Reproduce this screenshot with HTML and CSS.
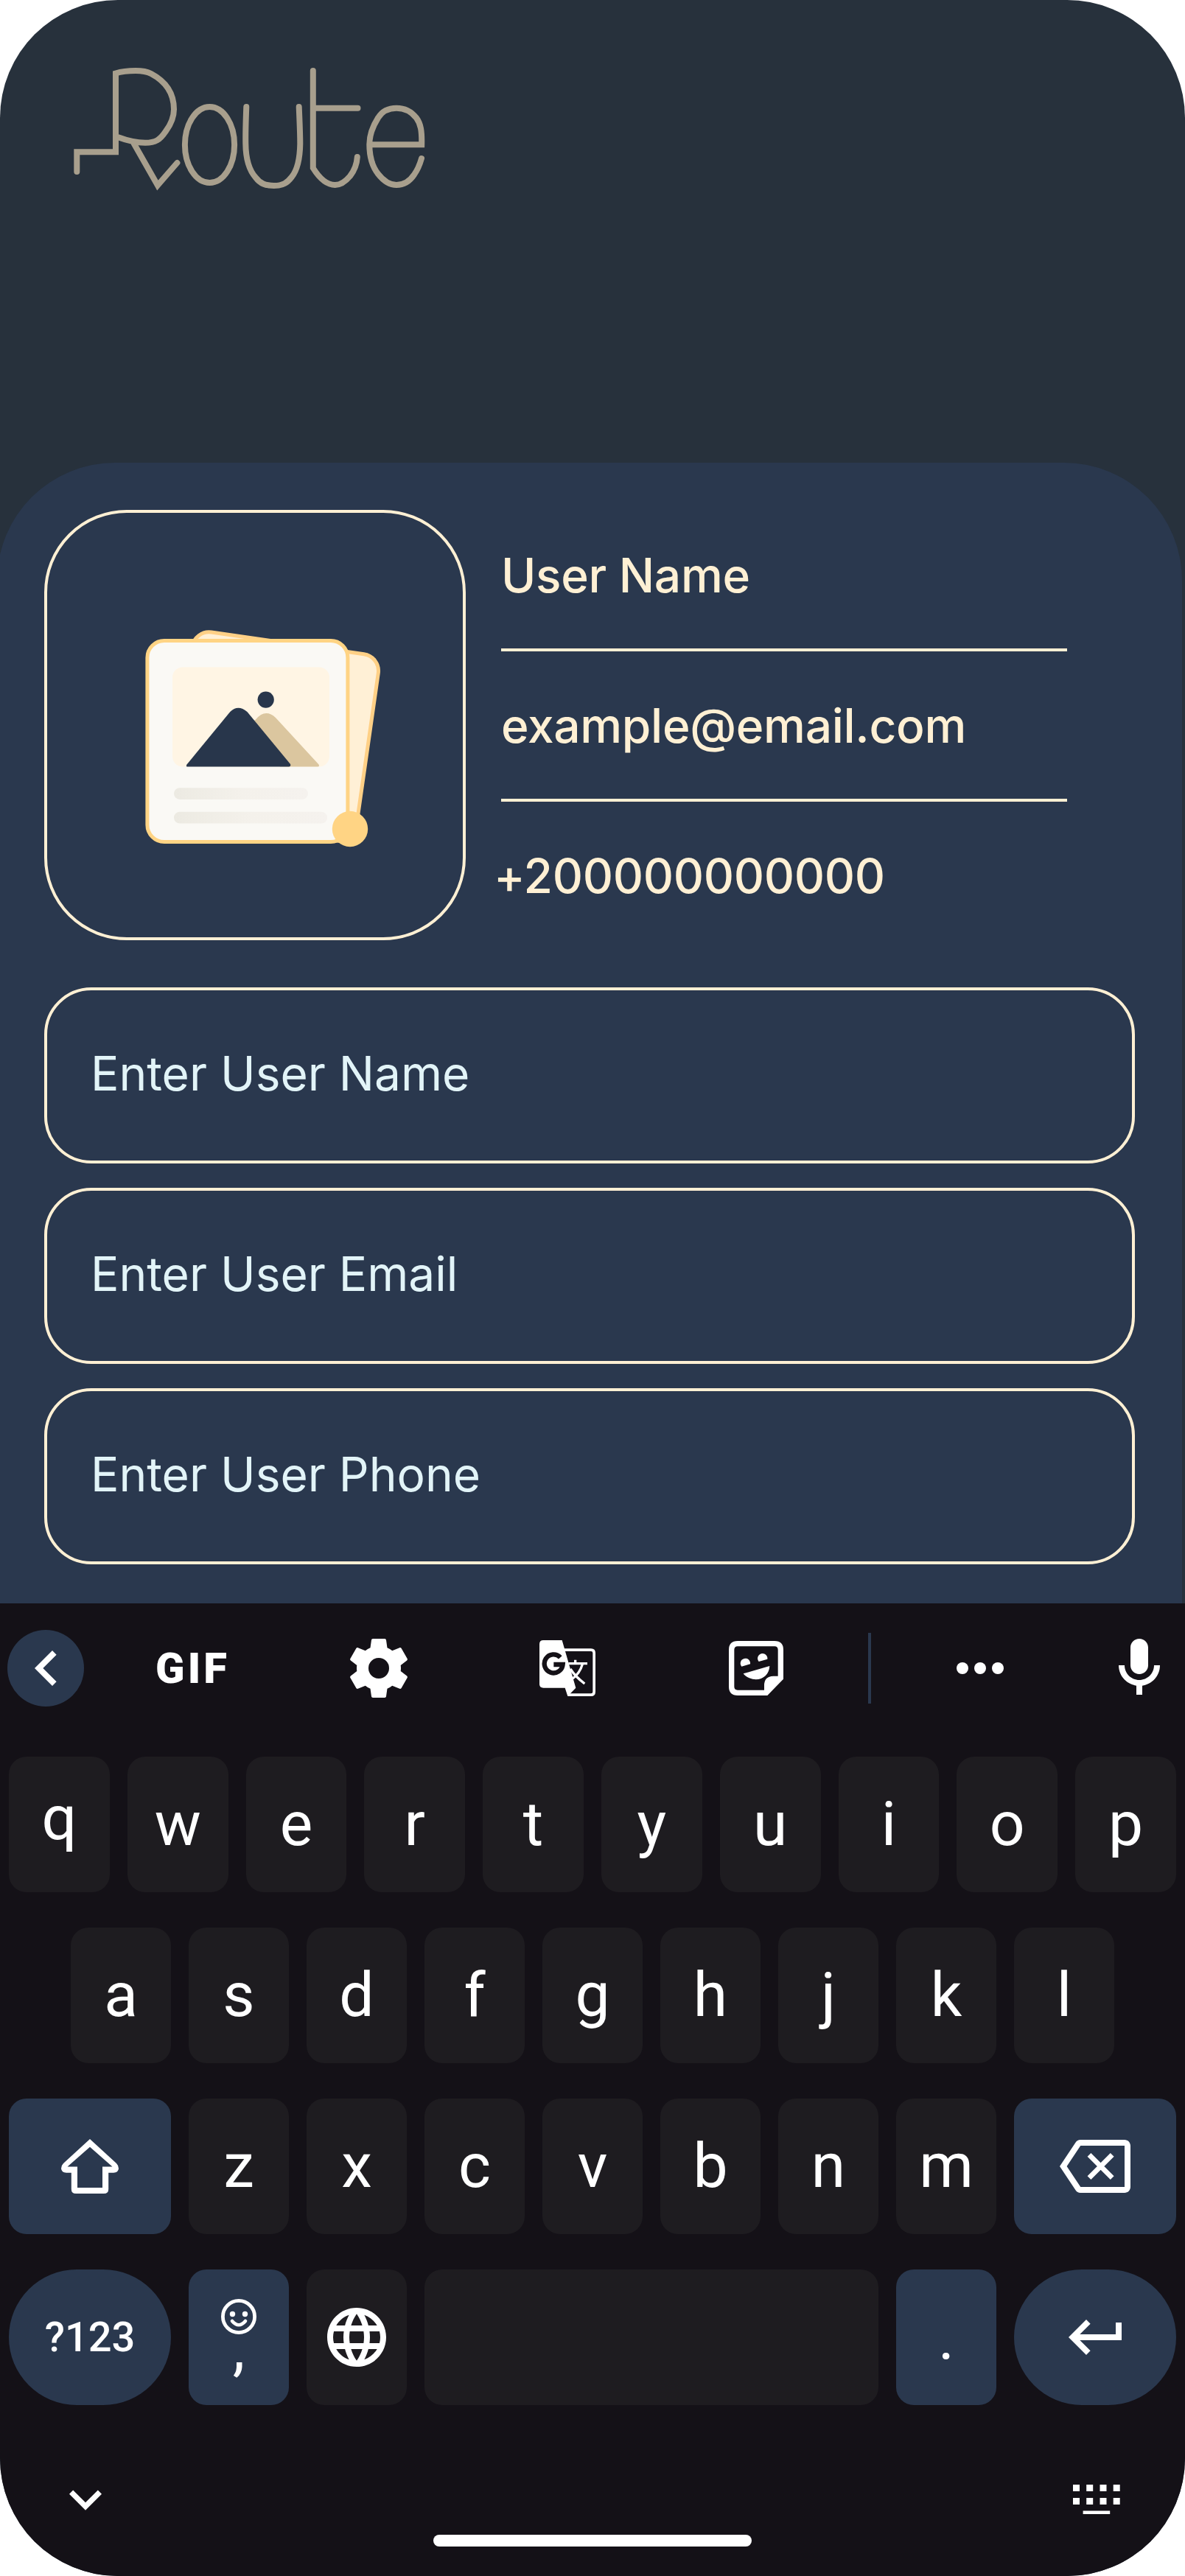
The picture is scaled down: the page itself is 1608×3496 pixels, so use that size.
FILE: index.html
```html
<!DOCTYPE html>
<html lang="en">
<head>
<meta charset="utf-8">
<title>Route</title>
<link rel="stylesheet" href="styles.css">
</head>
<body>
<div class="device">
  <header class="header">
    <svg class="logo" viewBox="96 88 488 176" role="img" aria-label="Route">
      <path d="M104.3 233V206.3H157V99.5C165 97 174 96 184 96C193 96 199 96.8 205 100C222 109 236 124 236 148.3C236 160 231 170 225 178C217 190 211 193.7 197 193.7C184 193.7 173 191 160.5 186.3"/>
      <path d="M181.8 195L213.9 251.5L240.4 221"/>
      <ellipse cx="284.5" cy="196.5" rx="33.6" ry="51.5"/>
      <path d="M334.3 145C333.5 165 333 180 333.3 195C333.5 215 338 231 347 241C353 249 360 252 371.8 252C384 252 390 248 396 240C404 230 407 213 407.3 195C407.3 180 406.5 165 405.7 145"/>
      <path d="M424.8 96V228C431 238 442 251 454.7 251C464 251 470 245 475 239C482 230 484.3 222 484.8 213M424.8 146.8H485.5"/>
      <path d="M503 196.3H572.2C572.6 178 571 168 565 160C558 151 549 146.7 538 146.7C527 146.7 519 150 513 160C506 171 501.3 184 501.3 196C501.3 213 506 227 513 236C520 245 528 251 538 251C548 251 556 246 562 237C567 230 570 222 572 215"/>
    </svg>
  </header>

  <main class="panel">
    <section class="profile">
      <div class="avatar">
        <svg class="picture" viewBox="190 845 334 310">
          <defs>
            <linearGradient id="line" x1="0" x2="1" y1="0" y2="0">
              <stop offset="0" stop-color="#ECEAE2"/>
              <stop offset="0.5" stop-color="#F4F1EB"/>
              <stop offset="1" stop-color="#F5F2EE"/>
            </linearGradient>
          </defs>
          <rect x="2.5" y="2.5" width="255" height="256" rx="23" transform="translate(262 852) rotate(8.15)" fill="#FFF0D6" stroke="#FFD086" stroke-width="5"/>
          <rect x="199.9" y="869.5" width="272" height="273" rx="23" fill="#FAF9F5" stroke="#FFD484" stroke-width="5"/>
          <rect x="234" y="905.4" width="213" height="135.2" rx="14" fill="#FFF5E4"/>
          <path d="M340 982L347 976.5Q360 961 374 974L432.5 1037.5Q434 1040.5 431 1040.5H380Z" fill="#DBC69F"/>
          <path d="M312.3 966Q323 955.5 335.4 966L394 1037Q395 1040.5 392 1040.5H254Q252 1040.5 253.5 1037.5Z" fill="#28364B"/>
          <circle cx="360.7" cy="949.6" r="11.1" fill="#28364B"/>
          <rect x="236" y="1069.3" width="182" height="15.6" rx="7.8" fill="url(#line)"/>
          <rect x="236" y="1101.8" width="208" height="15.8" rx="7.9" fill="url(#line)"/>
          <circle cx="475" cy="1125" r="24.2" fill="#FFD484"/>
        </svg>
      </div>
      <div class="details">
        <div class="detail">User Name</div>
        <div class="detail">example@email.com</div>
        <div class="detail detail-phone">+200000000000</div>
      </div>
    </section>
    <form class="form">
      <div class="field">Enter User Name</div>
      <div class="field">Enter User Email</div>
      <div class="field">Enter User Phone</div>
    </form>
  </main>

  <section class="keyboard">
    <div class="toolbar">
      <span class="back"><svg class="icon" viewBox="0 0 24 24"><path d="M15.41 7.41 14 6l-6 6 6 6 1.41-1.41L10.83 12z"/></svg></span>
      <span class="tool"><span class="gif">GIF</span></span>
      <span class="tool"><svg class="icon" viewBox="0 0 24 24"><path d="M12 15.5A3.5 3.5 0 0 1 8.5 12 3.5 3.5 0 0 1 12 8.5 3.5 3.5 0 0 1 15.5 12 3.5 3.5 0 0 1 12 15.5m7.43-2.53c.04-.32.07-.64.07-.97 0-.33-.03-.66-.07-1l2.11-1.63c.19-.15.24-.42.12-.64l-2-3.46c-.12-.22-.39-.31-.61-.22l-2.49 1c-.52-.39-1.06-.73-1.69-.98l-.37-2.65A.506.506 0 0 0 14 2h-4c-.25 0-.46.18-.5.42l-.37 2.65c-.63.25-1.17.59-1.69.98l-2.49-1c-.22-.09-.49 0-.61.22l-2 3.46c-.13.22-.07.49.12.64L4.57 11c-.04.34-.07.67-.07 1 0 .33.03.65.07.97l-2.11 1.66c-.19.15-.25.42-.12.64l2 3.46c.12.22.39.3.61.22l2.49-1.01c.52.4 1.06.74 1.69.99l.37 2.65c.04.24.25.42.5.42h4c.25 0 .46-.18.5-.42l.37-2.65c.63-.26 1.17-.59 1.69-.99l2.49 1.01c.22.08.49 0 .61-.22l2-3.46c.12-.22.07-.49-.12-.64z"/></svg></span>
      <span class="tool"><svg class="translate" viewBox="66 66 228 228">
        <path d="M160 105.5H276Q288.5 105.5 288.5 118V276Q288.5 288.5 276 288.5H182" fill="none" stroke="#fff" stroke-width="11"/>
        <path d="M82 66H158L214 260L181 294L170 260H82Q66 260 66 244V82Q66 66 82 66Z"/>
        <path d="M151 136A37.5 37.5 0 1 0 161 165H124" fill="none" stroke="#141117" stroke-width="19"/>
        <path d="M184 161H261M212 146V161M242 161Q230 204 196 226M192 183Q210 212 250 243" fill="none" stroke="#fff" stroke-width="10"/>
      </svg></span>
      <span class="tool"><svg class="sticker" viewBox="837 69 222 222">
        <path fill-rule="evenodd" d="M873 69H1023Q1059 69 1059 105V224L994 291H873Q837 291 837 255V105Q837 69 873 69ZM873 91Q859 91 859 105V255Q859 269 873 269H981V250Q981 213 1018 212H1037V105Q1037 91 1023 91Z"/>
        <path d="M889 173A20 20 0 1 1 924 163ZM959 153A20 20 0 1 1 994 143ZM896 202L1003 171C1002 212 962 238 920 220Q903 213 896 202Z"/>
      </svg></span>
      <span class="divider"></span>
      <span class="more"><i></i><i></i><i></i></span>
      <span class="mic"><svg class="icon" viewBox="0 0 24 24"><path d="M12 14c1.66 0 3-1.34 3-3V5c0-1.66-1.34-3-3-3S9 3.34 9 5v6c0 1.66 1.34 3 3 3zM17 11c0 2.76-2.24 5-5 5s-5-2.24-5-5H5c0 3.53 2.61 6.43 6 6.92V21h2v-3.08c3.39-.49 6-3.39 6-6.92z"/></svg></span>
    </div>
    <div class="rows">
      <div class="row">
        <span class="key key-q">q</span><span class="key">w</span><span class="key">e</span><span class="key">r</span><span class="key">t</span><span class="key">y</span><span class="key">u</span><span class="key">i</span><span class="key">o</span><span class="key">p</span>
      </div>
      <div class="row row-home">
        <span class="key">a</span><span class="key">s</span><span class="key">d</span><span class="key">f</span><span class="key">g</span><span class="key">h</span><span class="key">j</span><span class="key">k</span><span class="key">l</span>
      </div>
      <div class="row">
        <span class="key wide accent"><svg class="shift" viewBox="0 0 80 76"><path fill-rule="evenodd" d="M40 1L76 34Q79 37 79 41Q78.500 46.700 72 46.700H65.200V69Q65.200 75 59 75H21Q14.800 75 14.800 69V46.700H8Q1.500 46.700 1 41Q1 37 4 34ZM40 11.800L9.500 38.500H23V67H57V38.500H70.500Z"/></svg></span>
        <span class="key">z</span><span class="key">x</span><span class="key">c</span><span class="key">v</span><span class="key">b</span><span class="key">n</span><span class="key">m</span>
        <span class="key wide accent"><svg class="icon" viewBox="0 0 24 24"><path d="M22 3H7c-.69 0-1.23.35-1.59.88L0 12l5.41 8.11c.36.53.9.89 1.59.89h15c1.1 0 2-.9 2-2V5c0-1.1-.9-2-2-2zm0 16H7.07L2.4 12l4.66-7H22z"/><path d="M10 8.100L17.800 15.900M17.800 8.100L10 15.900" stroke="#fff" stroke-width="1.700"/></svg></span>
      </div>
      <div class="row">
        <span class="key wide accent pill symbols">?123</span>
        <span class="key accent emoji"><svg class="smile" viewBox="0 0 48 48"><circle cx="24" cy="24" r="21.600" fill="none" stroke="#fff" stroke-width="4.800"/><circle cx="15.500" cy="20.500" r="3.700"/><circle cx="32.500" cy="20.500" r="3.700"/><path d="M15 30Q24 40.500 33 30" fill="none" stroke="#fff" stroke-width="4.600" stroke-linecap="round"/></svg><span class="comma">,</span></span>
        <span class="key"><svg class="icon" viewBox="0 0 24 24"><path d="M11.99 2C6.47 2 2 6.480 2 12s4.470 10 9.990 10C17.520 22 22 17.520 22 12S17.520 2 11.990 2zm6.930 6h-2.950c-.32-1.250-.78-2.450-1.380-3.560 1.840.63 3.370 1.910 4.330 3.560zM12 4.040c.83 1.200 1.480 2.530 1.910 3.960h-3.820c.43-1.430 1.080-2.760 1.910-3.960zM4.260 14C4.100 13.360 4 12.690 4 12s.1-1.360.26-2h3.380c-.08.66-.14 1.320-.14 2s.06 1.340.14 2zm.82 2h2.950c.32 1.250.78 2.450 1.380 3.560-1.840-.63-3.370-1.900-4.330-3.560zm2.950-8H5.080c.96-1.660 2.490-2.930 4.330-3.560C8.810 5.550 8.350 6.750 8.030 8zM12 19.960c-.83-1.200-1.480-2.530-1.910-3.960h3.820c-.43 1.430-1.080 2.760-1.910 3.960zM14.340 14H9.660c-.09-.66-.16-1.320-.16-2s.07-1.350.16-2h4.680c.09.65.16 1.320.16 2s-.07 1.340-.16 2zm.25 5.560c.6-1.110 1.060-2.310 1.380-3.560h2.950c-.96 1.650-2.490 2.930-4.330 3.560zM16.360 14c.08-.66.14-1.320.14-2s-.06-1.340-.14-2h3.380c.16.640.26 1.310.26 2s-.1 1.360-.26 2z"/></svg></span>
        <span class="key space"></span>
        <span class="key accent period">.</span>
        <span class="key wide accent pill"><svg class="icon" viewBox="0 0 24 24"><path d="M19 7v4H6.830l3.580-3.590L9 6l-6 6 6 6 1.410-1.410L6.830 13H21V7z"/></svg></span>
      </div>
    </div>
    <div class="navbar">
      <svg class="hide" viewBox="0 0 24 24"><path d="M16.590 8.590 12 13.170 7.410 8.590 6 10l6 6 6-6z"/></svg>
      <span class="home"></span>
      <svg class="switcher" viewBox="0 0 64 40"><path d="M0 0h9v9H0zM18.200 0h9v9h-9zM36.500 0h9v9h-9zM54.700 0h9v9h-9zM0 18h9v9H0zM18.200 18h9v9h-9zM36.500 18h9v9h-9zM54.700 18h9v9h-9zM13.600 35.500h36.600v4.500H13.600z"/></svg>
    </div>
  </section>
</div>
</body>
</html>
```
FILE: styles.css
```css
* { box-sizing: border-box; }

body {
  margin: 0;
  background: #fff;
  font-family: Inter, "Liberation Sans", sans-serif;
}

svg {
  display: block;
  fill: #fff;
  flex: none;
}

.device {
  width: 1608px;
  height: 3496px;
  border-radius: 160px;
  overflow: hidden;
  display: flex;
  flex-direction: column;
  background: #27313c;
}

.header {
  height: 628px;
  padding: 88px 96px;
}

.logo {
  width: 488px;
  height: 176px;
  fill: none;
  stroke: #a89f8d;
  stroke-width: 8;
  stroke-linecap: round;
  stroke-miterlimit: 6;
}

.panel {
  width: 1608px;
  height: 1548px;
  margin-left: -4px;
  padding: 64px 64px 0;
  border-radius: 160px 160px 0 0;
  background: #2a384e;
}

.profile {
  display: flex;
  gap: 48px;
  height: 584px;
  margin-bottom: 64px;
}

.avatar {
  width: 572px;
  height: 584px;
  border: 4px solid #fff0d4;
  border-radius: 112px;
  padding: 149px 0 0 126px;
}

.picture {
  width: 334px;
  height: 310px;
}

.details { width: 768px; }

.detail {
  height: 192px;
  line-height: 178px;
  font-size: 64px;
  font-weight: 500;
  letter-spacing: -0.3px;
  color: #fff0d4;
  border-bottom: 4px solid #fff0d4;
  white-space: nowrap;
}

.detail + .detail {
  height: 204px;
  line-height: 202px;
}

.detail-phone.detail {
  height: 188px;
  border: 0;
  margin-left: -10px;
}

.form {
  display: flex;
  flex-direction: column;
  gap: 33px;
  width: 1480px;
}

.field {
  height: 239px;
  border: 4px solid #fff0d4;
  border-radius: 64px;
  padding-left: 59px;
  line-height: 226px;
  font-size: 64px;
  color: #e2f4f8;
}

.keyboard {
  height: 1320px;
  background: #141117;
  color: #fff;
  font-family: Roboto, "Liberation Sans", sans-serif;
}

.toolbar {
  height: 176px;
  padding-left: 10px;
  display: flex;
  align-items: center;
}

.icon { width: 96px; height: 96px; }

.back {
  width: 104px;
  height: 104px;
  border-radius: 50%;
  background: #2a384e;
  display: flex;
  align-items: center;
  padding-left: 5px;
  margin-right: 16px;
}

.tool {
  width: 256px;
  display: flex;
  justify-content: center;
}

.gif {
  font-size: 58px;
  font-weight: 900;
  letter-spacing: 4px;
  line-height: 80px;
  padding-left: 7px;
}

.translate { width: 76px; height: 76px; }
.sticker { width: 74px; height: 74px; }

.divider {
  width: 4px;
  height: 96px;
  margin-left: 24px;
  background: #2a384e;
}

.more {
  display: flex;
  gap: 8px;
  margin: 0 136px 0 116px;
}

.more i {
  width: 16px;
  height: 16px;
  border-radius: 50%;
  background: #fff;
}

.rows {
  padding: 32px 12px 0;
  display: flex;
  flex-direction: column;
  gap: 48px;
}

.row {
  display: flex;
  gap: 24px;
}

.row-home { padding: 0 84px; }

.key {
  flex: 1;
  height: 184px;
  border-radius: 24px;
  background: #1e1c20;
  display: flex;
  align-items: center;
  justify-content: center;
  font-size: 84px;
  line-height: 98px;
}

.key-q { padding-bottom: 16px; }
.wide { flex: 0 0 220px; }
.space { flex: 0 0 616px; }
.accent { background: #2a384e; }
.pill { border-radius: 92px; }
.shift { width: 80px; height: 76px; }

.symbols {
  font-size: 56px;
  font-weight: 500;
}

.emoji {
  flex-direction: column;
  justify-content: flex-start;
  padding-top: 40px;
}

.smile { width: 48px; height: 48px; }

.comma {
  line-height: 94px;
  margin-top: -28px;
}

.period { padding-top: 4px; }

.navbar {
  padding: 84px 0 0 72px;
  height: 232px;
  display: flex;
}

.hide { width: 88px; height: 88px; }

.home {
  width: 432px;
  height: 16px;
  margin: 92px 436px 0 428px;
  border-radius: 8px;
  background: #fff;
}

.switcher {
  width: 64px;
  height: 40px;
  margin-top: 24px;
}
```
